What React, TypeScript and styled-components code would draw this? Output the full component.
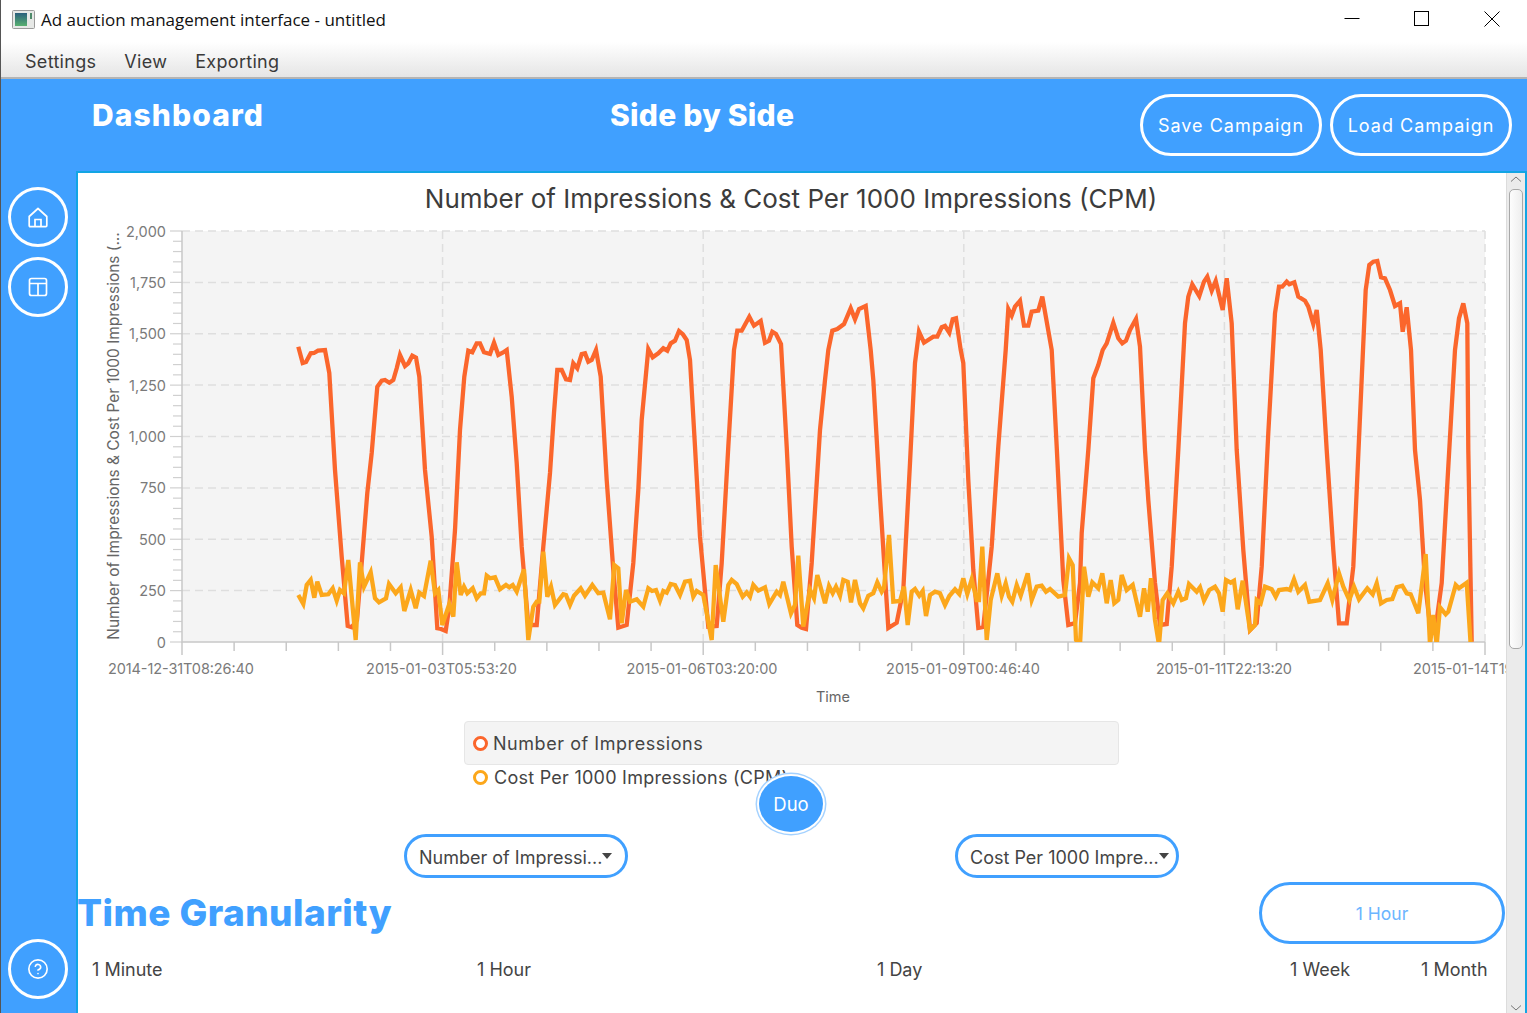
import React from "react";
import styled, { createGlobalStyle } from "styled-components";
import { CircleHelp } from "lucide-react";

const BLUE = "#40a0ff";
const UI_FONT = `Inter, "Noto Sans", sans-serif`;

const ORANGE_LINE =
  "298.3,346.7 302.7,363 306,362 310.7,353.3 314,353 318,350.7 325,350 329.3,373 335,470 341.7,556.7 347.7,626 351.7,627.3 357,620 361.7,563 367.3,493 371.7,453 377.3,386.7 381.7,380.7 385,380 389.3,382.7 393.3,380 396.7,368.3 400,355 405,366 408.3,363.3 412.3,355.7 416,357.7 419.3,376.7 425,470 431.7,536.7 437.3,628.3 441,629 445.7,631 449.3,606.7 455,530 460,430 464.3,376.7 468.3,350.7 472.3,352.3 476.7,343.3 480,343.3 484,352.3 490,354 494,342.7 498.3,355 502.7,352.7 506.7,350 511.7,396.7 516.7,463 521.7,546.7 528.3,625 536.7,625 543.3,546.7 550,473 554,413 557.3,370 561.7,370 566,379.3 570,380 573.3,363.3 577.3,368.3 581.7,354 585,353.3 588.3,361.7 591.7,360 596,350 600.7,376.7 606.7,480 613.3,570 618.3,627.7 626.7,625 633.3,563 638.3,490 641.7,420 648.3,349 652.7,357.3 658.3,353.3 663.3,348.3 667.3,350.7 670.7,343.3 675,340.7 679,331 683,334.5 686.7,340 690,360 695,446.7 700,536.7 708.3,626.7 716.7,626 721.7,563 728.3,446.7 734,350 737.3,330.7 741.7,330.7 749.3,316.7 754,325.7 760.7,321 765,342.7 769,340.7 772.3,331.7 776,334 781,344 786.7,446.7 791.7,546.7 797.3,625 801.7,627.7 806,629 811.7,563 820,430 825,380 828.3,350 832.3,330.7 837.3,329 844,324 850.7,308.3 855,319.3 859,309 865.7,306 870.7,350 873.3,380 880,496.7 888.3,628 896.7,622.7 903.3,590 910,463 915,363 919,331.7 924,342.7 933.3,336.7 937.3,336.7 941.7,327.3 945,326 949.3,332.7 952.7,319.3 956,318.3 960.7,350 963.3,363 968.3,480 973.3,570 978.3,628 983.3,627 991.7,546.7 998.3,446.7 1005.7,350 1008.3,309 1011.7,315.7 1015,306.7 1020,300.7 1024,325.7 1028.3,325.7 1031.7,311.7 1038.3,310.7 1042.3,296.7 1051.7,350 1056.7,446.7 1063.3,580 1068.3,625 1075,623 1080,583 1081.7,533 1088.3,450 1093.3,378.3 1098.3,365 1102.7,350 1106.7,343.3 1113.3,322.7 1118.3,338.3 1122.3,343.3 1126,340.7 1130,330 1136,319 1140,346.7 1145,450 1148.3,500 1155,583 1160,625 1166.7,624 1171.7,566.7 1178.3,450 1185,323.3 1188.3,296.7 1192.3,284.3 1199.3,296 1204,281.7 1207.3,276.7 1211.7,290.7 1215.7,281 1222.7,310 1226.7,278.3 1231.7,323.3 1236.7,450 1243.3,550 1250,630 1256.7,623 1261.7,566.7 1268.3,433 1275,313.3 1279,286.7 1282.3,286.7 1286.7,281.7 1289.3,284.3 1294.3,282.3 1298.3,296.7 1305,300.7 1308.3,306.7 1313.3,324 1316.7,310 1320.7,350 1326.7,450 1333.3,550 1339,623.3 1346.7,623.3 1353.3,566.7 1360,416.7 1365.7,290 1369.3,265 1373.3,261.7 1377.3,261 1381,277.3 1385,278.3 1390,290 1395,306 1400,303.3 1402.7,331.7 1406.7,307.3 1411,350 1415,450 1420,500 1425,583 1430,625 1436,625 1441.7,583 1448.3,466.7 1455,350 1459,318.3 1463.3,303.3 1467.3,323.3 1468.3,450 1471.7,641.7";

const AMBER_LINE =
  "298.3,595 303.3,604 306.7,585 310.7,580 314.3,597.7 317.3,581.7 321.7,595 328.3,594.3 332.7,588.3 336.7,600.7 340,590 344,593.3 348.3,560 355.7,640 360,562.3 364,586.7 370.7,572.3 375,598.3 379,602.3 386,598.3 389,584 395.7,593.3 400.7,587.3 404.3,611 410.7,590 415.7,608.3 419.3,592.7 424,596 430.7,560.7 435,593.3 438.3,590 442.3,625 449.3,604 453.3,616.7 456.7,562.3 460.7,595 464,586.7 467.3,593.3 472.7,588.3 476.7,598.3 480.7,593.3 484,593.3 486.7,575.7 490,578.3 495,577.3 500,589.3 506,585 509.3,587.3 512.7,585 516.7,591.7 524,569.3 528.3,640 533.3,606.7 536.7,601.7 539.3,601.7 543.3,551.7 547.3,596.7 551,586.7 555,605 563.3,594.3 566,595 570,605 574,595.7 580.7,588.3 585,595.7 592.3,585 598.3,593.3 603.3,592.7 610,619.3 614.3,565 618.3,568.3 621.7,623.3 626,590 630,601.7 636.7,599.3 643.3,606.7 648.3,588.3 652,591 656,590 660,600.7 663.3,591 666.7,592.7 670.7,584 675,585 680,595 685,581.7 690,580.7 693.3,596.7 696.7,591 703.3,595 706.7,613 711.7,640 715.7,565 723.3,621.7 728.3,585 731.7,580 736.7,584 742.7,596.7 746.7,592.3 750,596.7 753.3,585 758.3,590.7 765,587.3 769.3,604 776.7,591.7 780,595 783.3,581.7 791,613.3 795,605 798.3,555.7 803.3,626.7 810,590 814,598.3 817.3,575 825,603.3 829,586 832.7,593.3 836,586.7 840,595.7 843.3,580 847.7,581.7 851,602.3 855,580 860,603.3 863.3,608.3 868.3,595.7 873.3,593.3 877.3,582.3 881.7,591.7 884,588 889,535 893.3,601.7 900,601 904,586.7 907.7,625 911.7,591.7 915,589 919.3,595.7 922.7,591 926,616 930,595 935,591.7 940,593.3 945,605 949.3,596 955,589.3 959.3,594 963.3,578.3 967.3,594 971.7,579.3 976.7,600 979,600 982.3,546.7 986.7,640 990.7,600 997.3,573.3 1001.7,595.7 1005.7,583.3 1009,596.7 1012.3,601.7 1016.7,585 1020.7,595.7 1027.7,573.3 1031.7,600 1036.7,586.7 1041.7,585.7 1046,591.7 1050,589 1058.3,596.7 1065,595 1069,558.3 1072.7,565 1076,640 1080,645 1084,566.7 1088.3,596.7 1092.3,582.3 1098.3,588.3 1102.3,573.3 1106.7,603.3 1110.7,580 1114.3,603.3 1118.3,600 1121.7,575 1126.7,590 1132.7,585 1140,616.7 1144,588.3 1147.7,611.7 1151,578.3 1155,620 1159,645 1162.7,600 1167.3,593.3 1173.3,603.3 1178.3,591.7 1181.7,600 1186,598.3 1189,584 1196.7,591.7 1200,587.3 1204,600.7 1209.3,590 1215,586.7 1219,593.3 1222.7,611.7 1226,580 1230.7,582.7 1234,580.7 1237.7,609.3 1242.7,580.7 1250,630 1255,625 1256.7,600 1260.7,603.3 1265,586.7 1271.7,589.3 1275.7,596.7 1279,590 1286.7,589 1290,590 1294,579.3 1298.3,591.7 1305,585 1309.3,601.7 1320,600 1327.7,583.3 1332.3,600 1339,573.3 1343.3,586.7 1349.3,600 1354,586.7 1359,599.3 1367.3,588.3 1372.7,594.3 1376.7,583.3 1381,603.3 1386.7,600 1392.3,599 1396.7,587.3 1402.3,585.7 1406.7,593.3 1410.7,594.3 1418.3,613.3 1425.7,554 1430,645 1433.3,615 1436.7,645 1440,607.3 1445.7,614.3 1448.3,611.7 1455.7,585 1459,588.3 1466.7,582.7 1470.7,645";

const PLOT = { left: 182, right: 1485, top: 231, bottom: 642 };
const X_STEP = 52.12;
const Y_STEP = 10.275;

const yLabels = [
  ["2,000", 231],
  ["1,750", 282.4],
  ["1,500", 333.8],
  ["1,250", 385.1],
  ["1,000", 436.5],
  ["750", 487.9],
  ["500", 539.3],
  ["250", 590.6],
  ["0", 642],
] as const;

const xLabels = [
  ["2014-12-31T08:26:40", 181, 146],
  ["2015-01-03T05:53:20", 441.5, 151],
  ["2015-01-06T03:20:00", 702, 151],
  ["2015-01-09T00:46:40", 963, 154],
  ["2015-01-11T22:13:20", 1224, 136],
] as const;

const GlobalStyle = createGlobalStyle`
  html, body {
    margin: 0;
    padding: 0;
    background: #fff;
  }
`;

const Window = styled.div`
  width: 1527px;
  height: 1013px;
  box-sizing: border-box;
  border-left: 1px solid #555;
  display: flex;
  flex-direction: column;
  overflow: hidden;
  font-family: ${UI_FONT};
`;

const TitleBar = styled.div`
  height: 42px;
  flex-shrink: 0;
  display: flex;
  align-items: center;
  background: #fff;
  padding-left: 11px;
  padding-bottom: 4px;
  box-sizing: border-box;
`;

const TitleText = styled.span`
  margin-left: 6px;
  font-family: "Open Sans", sans-serif;
  font-size: 17px;
  color: #111;
`;

const WindowControls = styled.div`
  margin-left: auto;
  display: flex;
  align-items: center;
  gap: 54px;
  padding-right: 27px;
`;

const MenuBar = styled.div`
  height: 37px;
  flex-shrink: 0;
  box-sizing: border-box;
  display: flex;
  align-items: center;
  gap: 28px;
  padding: 3px 0 0 24px;
  background: linear-gradient(#fff, #e5e5e5);
  border-bottom: 2px solid #b4b4b4;
`;

const MenuItem = styled.span`
  font-size: 18px;
  letter-spacing: 0.3px;
  color: #3a3a3a;
`;

const Header = styled.header`
  height: 92px;
  flex-shrink: 0;
  display: flex;
  background: ${BLUE};
  box-sizing: border-box;
  padding: 15px 15px 0 91px;
`;

const HeaderTitle = styled.h1<{ $width: number; $spacing: number }>`
  width: ${(p) => p.$width}px;
  margin: 0;
  font-size: 30px;
  line-height: 42px;
  font-weight: 800;
  letter-spacing: ${(p) => p.$spacing}px;
  color: #fff;
`;

const HeaderActions = styled.div`
  margin-left: auto;
  display: flex;
  gap: 8px;
`;

const OutlineButton = styled.button`
  width: 182px;
  height: 62px;
  border: 3px solid #fff;
  border-radius: 31px;
  background: transparent;
  color: #fff;
  font-family: ${UI_FONT};
  font-size: 18px;
  letter-spacing: 1px;
  padding: 0;
`;

const Main = styled.div`
  flex: 1;
  min-height: 0;
  display: flex;
  background: ${BLUE};
`;

const Sidebar = styled.nav`
  width: 75px;
  flex-shrink: 0;
  box-sizing: border-box;
  display: flex;
  flex-direction: column;
  gap: 10px;
  padding: 16px 0 14px 7px;
`;

const NavButton = styled.button<{ $bottom?: boolean }>`
  width: 60px;
  height: 60px;
  box-sizing: border-box;
  border: 3px solid #fff;
  border-radius: 50%;
  background: transparent;
  color: #fff;
  padding: 0;
  display: flex;
  align-items: center;
  justify-content: center;
  margin-top: ${(p) => (p.$bottom ? "auto" : "0")};
`;

const Panel = styled.section`
  flex: 1;
  min-width: 0;
  display: flex;
  background: #fff;
  border: 2px solid #12a5e4;
  border-bottom: 0;
`;

const Content = styled.div`
  position: relative;
  width: 1428px;
  flex-shrink: 0;
  overflow: hidden;
`;

const ChartSvg = styled.svg`
  display: block;
  font-family: ${UI_FONT};
`;

const ChartTitle = styled.text`
  font-size: 26px;
  fill: #3c3c3c;
  text-anchor: middle;
`;

const AxisTitle = styled.text<{ $size: number }>`
  font-size: ${(p) => p.$size}px;
  fill: #666;
  text-anchor: middle;
`;

const TickLabel = styled.text<{ $anchor: string }>`
  font-size: 14.5px;
  fill: #7a7a7a;
  text-anchor: ${(p) => p.$anchor};
`;

const Legend = styled.div`
  width: 655px;
  margin: 10px 0 0 386px;
  font-size: 18px;
  color: #444;
`;

const LegendRow = styled.div<{ $boxed?: boolean }>`
  height: ${(p) => (p.$boxed ? 44 : 24)}px;
  box-sizing: border-box;
  display: flex;
  align-items: center;
  gap: ${(p) => (p.$boxed ? 5 : 6)}px;
  padding-left: ${(p) => (p.$boxed ? 8 : 9)}px;
  border-radius: 4px;
  letter-spacing: ${(p) => (p.$boxed ? 0.55 : 0.25)}px;
  background: ${(p) => (p.$boxed ? "#f4f4f4" : "transparent")};
  border: ${(p) => (p.$boxed ? "1px solid #e6e6e6" : "0")};
`;

const LegendRing = styled.span<{ $color: string }>`
  width: 15px;
  height: 15px;
  box-sizing: border-box;
  border: 3px solid ${(p) => p.$color};
  border-radius: 50%;
  background: #fff;
`;

const DuoButton = styled.button`
  position: absolute;
  left: 681px;
  top: 603px;
  width: 64px;
  height: 56px;
  border: 0;
  border-radius: 50%;
  background: ${BLUE};
  color: #fff;
  font-family: ${UI_FONT};
  font-size: 18.5px;
  padding: 0;
  box-shadow: 0 0 0 2px #fff, 0 0 0 3.5px #a5d2ff;
`;

const SelectRow = styled.div`
  display: flex;
  gap: 327px;
  margin: 45px 0 0 326px;
`;

const Select = styled.div`
  width: 224px;
  height: 44px;
  box-sizing: border-box;
  border: 3px solid ${BLUE};
  border-radius: 22px;
  display: flex;
  align-items: center;
  padding: 2px 14px 0 12px;
  font-size: 18px;
  color: #444;
  white-space: nowrap;
`;

const SelectArrow = styled.span`
  margin: -2px 0 0 auto;
  width: 0;
  height: 0;
  border-left: 5px solid transparent;
  border-right: 5px solid transparent;
  border-top: 6px solid #444;
`;

const Granularity = styled.div`
  position: relative;
  margin-top: 7px;
`;

const GranularityTitle = styled.h2`
  margin: 0 0 0 -1px;
  height: 52px;
  padding-top: 2px;
  line-height: 52px;
  font-size: 37px;
  font-weight: 800;
  letter-spacing: 0.45px;
  color: ${BLUE};
`;

const SliderThumb = styled.div`
  position: absolute;
  right: 1px;
  top: -3px;
  width: 246px;
  height: 62px;
  box-sizing: border-box;
  border: 3px solid ${BLUE};
  border-radius: 31px;
  background: #fff;
  display: flex;
  align-items: center;
  justify-content: center;
  padding-top: 1px;
  color: #6bb5ff;
  font-size: 17.5px;
`;

const SliderLabels = styled.div`
  display: grid;
  grid-template-columns: 385px 400px 413px 131px auto;
  margin: 20px 0 0 14px;
  font-size: 18px;
  color: #444;
`;

const Scrollbar = styled.div`
  width: 19px;
  flex-shrink: 0;
  box-sizing: border-box;
  display: flex;
  flex-direction: column;
  align-items: center;
  padding-top: 2px;
  background: #ebebeb;
  border-left: 1px solid #dcdcdc;
`;

const ScrollThumb = styled.div`
  width: 14px;
  height: 460px;
  margin-top: 6px;
  box-sizing: border-box;
  border: 1px solid #a8a8a8;
  border-radius: 5px;
  background: linear-gradient(90deg, #fdfdfd, #eee);
`;

const ScrollArrowDown = styled.svg`
  margin-top: auto;
  margin-bottom: 1px;
`;

const AppIcon = () => (
  <svg width="23" height="19" viewBox="0 0 23 19">
    <defs>
      <linearGradient id="appIconFill" x1="0" y1="0" x2="0" y2="1">
        <stop offset="0" stopColor="#2a5f7c" />
        <stop offset="1" stopColor="#58b070" />
      </linearGradient>
    </defs>
    <rect x="0.5" y="0.5" width="22" height="18" rx="1" fill="#e6e8e6" stroke="#9a9a9a" />
    <rect x="3" y="3" width="12" height="13" fill="url(#appIconFill)" />
    <rect x="18" y="3" width="2" height="6" fill="#4e8a6a" />
  </svg>
);

const MinimizeIcon = () => (
  <svg width="16" height="16" viewBox="0 0 16 16">
    <path d="M0.5 7.5H15.5" stroke="#000" fill="none" />
  </svg>
);

const MaximizeIcon = () => (
  <svg width="16" height="16" viewBox="0 0 16 16">
    <rect x="0.5" y="0.5" width="14" height="14" stroke="#000" fill="none" />
  </svg>
);

const CloseIcon = () => (
  <svg width="16" height="16" viewBox="0 0 16 16">
    <path d="M0.5 0.5L15.5 15.5M15.5 0.5L0.5 15.5" stroke="#000" fill="none" />
  </svg>
);

const HomeIcon = () => (
  <svg width="20" height="21" viewBox="0 0 20 21" fill="none" stroke="#fff" strokeWidth="1.7">
    <path d="M10 1.5L18.8 9.5V18.6Q18.8 19.6 17.8 19.6H2.2Q1.2 19.6 1.2 18.6V9.5Z" strokeLinejoin="round" />
    <path d="M7 19.6V12.5H13V19.6" />
  </svg>
);

const LayoutIcon = () => (
  <svg width="20" height="20" viewBox="0 0 20 20" fill="none" stroke="#fff" strokeWidth="1.7">
    <rect x="1.5" y="1.5" width="17" height="17" rx="2" />
    <path d="M1.5 6.5H18.5M10 6.5V18.5" />
  </svg>
);

const Chart = () => {
  const xTicks = Array.from({ length: 26 }, (_, i) => PLOT.left + i * X_STEP);
  const yTicks = Array.from({ length: 41 }, (_, i) => PLOT.bottom - i * Y_STEP);
  return (
    <ChartSvg width="1428" height="538" viewBox="78 173 1428 538">
      <defs>
        <clipPath id="plotClip">
          <rect x={PLOT.left} y={PLOT.top} width={PLOT.right - PLOT.left} height={PLOT.bottom - PLOT.top} />
        </clipPath>
      </defs>
      <ChartTitle x="791" y="208">
        Number of Impressions &amp; Cost Per 1000 Impressions (CPM)
      </ChartTitle>
      <rect x={PLOT.left} y={PLOT.top} width={PLOT.right - PLOT.left} height={PLOT.bottom - PLOT.top} fill="#f4f4f4" />
      {yLabels.slice(0, 8).map(([, y]) => (
        <path key={y} d={`M${PLOT.left} ${y}H${PLOT.right}`} stroke="#dedede" strokeWidth="1.5" strokeDasharray="8 5" />
      ))}
      {xTicks.filter((_, i) => i % 5 === 0 && i > 0).map((x) => (
        <path key={x} d={`M${x} ${PLOT.top}V${PLOT.bottom}`} stroke="#dedede" strokeWidth="1.5" strokeDasharray="8 5" />
      ))}
      {yTicks.map((y, i) => (
        <path key={y} d={`M${i % 5 === 0 ? 170 : 173} ${y}H${PLOT.left}`} stroke="#d0d0d0" strokeWidth="1.2" />
      ))}
      {xTicks.map((x, i) => (
        <path key={x} d={`M${x} ${PLOT.bottom}V${i % 5 === 0 ? 655 : 651}`} stroke="#c8c8c8" strokeWidth="1.5" />
      ))}
      <path d={`M${PLOT.left} ${PLOT.top}V${PLOT.bottom}H${PLOT.right}`} stroke="#c8c8c8" strokeWidth="1.5" fill="none" />
      <g clipPath="url(#plotClip)" fill="none" strokeWidth="4.3">
        <polyline points={ORANGE_LINE} stroke="#fb662c" />
        <polyline points={AMBER_LINE} stroke="#fca71b" />
      </g>
      {yLabels.map(([label, y]) => (
        <TickLabel key={label} x="166" y={y + 5.5} $anchor="end">
          {label}
        </TickLabel>
      ))}
      {xLabels.map(([label, x, width]) => (
        <TickLabel key={label} x={x} y="674" $anchor="middle" textLength={width}>
          {label}
        </TickLabel>
      ))}
      <TickLabel x="1413" y="674" $anchor="start">
        2015-01-14T19:40:00
      </TickLabel>
      <AxisTitle x="833" y="702" $size={14.5}>
        Time
      </AxisTitle>
      <AxisTitle transform="translate(119 436) rotate(-90)" $size={15.45}>
        Number of Impressions &amp; Cost Per 1000 Impressions (...
      </AxisTitle>
    </ChartSvg>
  );
};

export default function App() {
  return (
    <>
      <GlobalStyle />
      <Window>
        <TitleBar>
          <AppIcon />
          <TitleText>Ad auction management interface - untitled</TitleText>
          <WindowControls>
            <MinimizeIcon />
            <MaximizeIcon />
            <CloseIcon />
          </WindowControls>
        </TitleBar>
        <MenuBar>
          <MenuItem>Settings</MenuItem>
          <MenuItem>View</MenuItem>
          <MenuItem>Exporting</MenuItem>
        </MenuBar>
        <Header>
          <HeaderTitle $width={518} $spacing={1.1}>Dashboard</HeaderTitle>
          <HeaderTitle $width={300} $spacing={0.25}>Side by Side</HeaderTitle>
          <HeaderActions>
            <OutlineButton>Save Campaign</OutlineButton>
            <OutlineButton>Load Campaign</OutlineButton>
          </HeaderActions>
        </Header>
        <Main>
          <Sidebar>
            <NavButton>
              <HomeIcon />
            </NavButton>
            <NavButton>
              <LayoutIcon />
            </NavButton>
            <NavButton $bottom>
              <CircleHelp size={22} strokeWidth={1.8} />
            </NavButton>
          </Sidebar>
          <Panel>
            <Content>
              <Chart />
              <Legend>
                <LegendRow $boxed>
                  <LegendRing $color="#fb662c" />
                  Number of Impressions
                </LegendRow>
                <LegendRow>
                  <LegendRing $color="#fca71b" />
                  Cost Per 1000 Impressions (CPM)
                </LegendRow>
              </Legend>
              <DuoButton>Duo</DuoButton>
              <SelectRow>
                <Select>
                  Number of Impressi...
                  <SelectArrow />
                </Select>
                <Select>
                  Cost Per 1000 Impre...
                  <SelectArrow />
                </Select>
              </SelectRow>
              <Granularity>
                <GranularityTitle>Time Granularity</GranularityTitle>
                <SliderThumb>1 Hour</SliderThumb>
                <SliderLabels>
                  <span>1 Minute</span>
                  <span>1 Hour</span>
                  <span>1 Day</span>
                  <span>1 Week</span>
                  <span>1 Month</span>
                </SliderLabels>
              </Granularity>
            </Content>
            <Scrollbar>
              <svg width="12" height="8" viewBox="0 0 12 8">
                <path d="M1 6.5L6 2L11 6.5" stroke="#777" fill="none" />
              </svg>
              <ScrollThumb />
              <ScrollArrowDown width="12" height="8" viewBox="0 0 12 8">
                <path d="M1 1.5L6 6L11 1.5" stroke="#777" fill="none" />
              </ScrollArrowDown>
            </Scrollbar>
          </Panel>
        </Main>
      </Window>
    </>
  );
}
